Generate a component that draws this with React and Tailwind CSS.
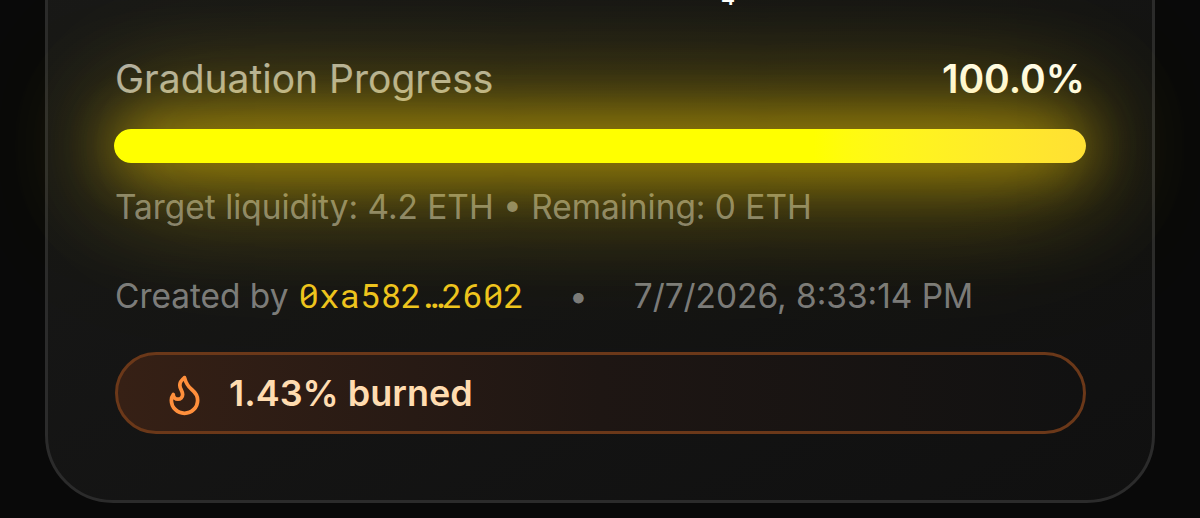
import { Flame } from 'lucide-react';

function GraduationProgress({ percent }) {
  return (
    <div>
      <div className="flex items-center justify-between h-14 text-[39px] leading-[56px]">
        <span className="text-white/65">Graduation Progress</span>
        <span className="font-semibold text-white">{percent.toFixed(1)}%</span>
      </div>
      <div className="-mx-px mt-[22px] h-[34px] rounded-full">
        <div
          className="relative h-full rounded-full bg-linear-to-r from-[#ffff00] from-72% to-[#ffe033] shadow-[0_0_56px_rgba(255,215,0,0.6),0_0_112px_rgba(255,215,0,1),0_0_168px_rgba(255,215,0,0.4)]"
          style={{ width: `${percent}%` }}
        />
      </div>
      <div className="mt-[22px] text-[33.4px] leading-[45px] text-white/45">
        Target liquidity: 4.2 ETH • Remaining: 0 ETH
      </div>
    </div>
  );
}

function App() {
  return (
    <div className="h-[518px] overflow-hidden bg-[#090909] px-[45px] font-['Inter',sans-serif]">
      <div className="-mt-[100px] h-[603px] rounded-[68px] border-[3px] border-[#2b2b2b] bg-linear-to-br from-[#191918] to-[#101010] px-[67px]">
        <div className="h-[148px] pt-[71px] pl-[606px] text-[21px] leading-[48px] font-semibold text-white">4</div>
        <GraduationProgress percent={100} />
        <div className="mt-[44px] flex items-center text-[33.4px] leading-[45px] text-white/45">
          <span>Created by</span>
          <span className="relative -top-[2px] ml-[10px] font-['Roboto_Mono','DejaVu_Sans_Mono',monospace] text-[34px] tracking-[0.1px] text-[#eec41d]">0xa582…2602</span>
          <span className="ml-[45px]">•</span>
          <span className="ml-[46px]">7/7/2026, 8:33:14 PM</span>
        </div>
        <div className="mt-[33px] -mr-px flex h-[82px] items-center rounded-full border-[3px] border-[#6b3819] bg-linear-to-r from-[#362015] via-[#1e1613] to-[#111111] px-[44px]">
          <Flame className="mt-[3px] size-[45px] text-[#ff8f3c]" strokeWidth={2} />
          <span className="ml-[22px] text-[36px] font-semibold text-[#ffdcb0]">1.43% burned</span>
        </div>
      </div>
    </div>
  );
}

export default App;
